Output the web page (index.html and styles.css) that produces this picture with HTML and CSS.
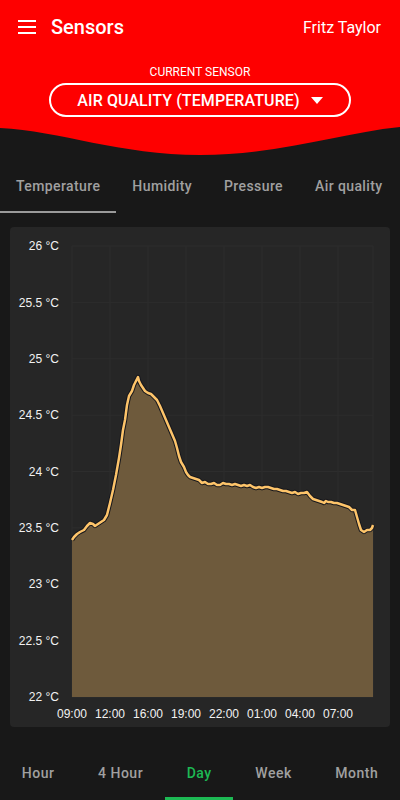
FILE: index.html
```html
<!DOCTYPE html>
<html lang="en">
<head>
  <meta charset="UTF-8" />
  <title>Sensors</title>
  <link rel="stylesheet" href="styles.css">
</head>
<body>
  <header class="header">
    <div class="topbar">
      <svg class="menu-icon" width="18" height="14" viewBox="0 0 18 14">
        <rect x="0" y="0" width="18" height="2" fill="#fff"/>
        <rect x="0" y="6" width="18" height="2" fill="#fff"/>
        <rect x="0" y="12" width="18" height="2" fill="#fff"/>
      </svg>
      <span class="title">Sensors</span>
      <span class="user">Fritz Taylor</span>
    </div>
    <div class="sensor-label">CURRENT SENSOR</div>
    <button class="sensor-select">
      <span>AIR QUALITY (TEMPERATURE)</span>
      <svg width="12" height="7" viewBox="0 0 12 7"><path d="M0 0 H12 L6 7 Z" fill="#fff"/></svg>
    </button>
  </header>
  <svg class="wave" width="400" height="30" viewBox="0 0 400 30" preserveAspectRatio="none">
    <path d="M0 0 H400 V0 C340 6 280 28 200 28 C120 28 60 4 0 1 Z" fill="#fe0000"/>
  </svg>

  <nav class="tabs">
    <div class="tab active">Temperature</div>
    <div class="tab">Humidity</div>
    <div class="tab">Pressure</div>
    <div class="tab">Air quality</div>
  </nav>

  <section class="card">
    <svg id="chart" width="380" height="500" viewBox="10 227 380 500"></svg>
  </section>

  <nav class="ranges">
    <div class="range">Hour</div>
    <div class="range">4 Hour</div>
    <div class="range active">Day</div>
    <div class="range">Week</div>
    <div class="range">Month</div>
  </nav>

  <script>
    // pontos da curva de temperatura (coordenadas da tela)
    const pts = [
      [72,540],[74,537],[77,534],[80,532],[84,530],[87,526],[90,523],[93,524],[95,526],[98,524],
      [101,522],[104,520],[107,515],[110,503],[113,490],[116,475],[119,458],[121,445],[123,430],[125,420],
      [127,405],[129,396],[132,391],[134,385],[136,381],[138,377],[139,381],[141,385],[143,388],[145,391],
      [148,393],[151,394],[154,397],[157,400],[160,406],[163,413],[166,420],[169,427],[172,434],[175,441],
      [177,448],[179,456],[181,462],[184,467],[186,472],[188,475],[190,477],[193,478],[196,479],[199,480],
      [202,483],[205,482],[208,484],[211,484],[214,483],[217,485],[220,485],[223,483],[226,484],[229,484],
      [232,485],[235,484],[238,485],[241,486],[244,485],[247,486],[250,485],[253,487],[256,488],[259,487],
      [262,488],[265,487],[268,487],[271,488],[274,489],[277,489],[280,490],[283,491],[286,491],[289,492],
      [292,493],[295,492],[298,494],[301,493],[304,493],[307,492],[310,496],[313,499],[316,500],[319,501],
      [322,502],[324,503],[326,501],[328,502],[331,502],[334,503],[337,503],[340,504],[343,505],[346,506],
      [349,507],[352,510],[355,510],[357,517],[359,524],[361,530],[364,532],[367,530],[370,530],[372,528],[373,525]
    ];

    const yTop = 246, yBottom = 697, xLeft = 72, xRight = 373;
    const step = (yBottom - yTop) / 8;
    let svg = '';

    // grade
    for (let i = 0; i <= 8; i++) {
      const y = yTop + step * i;
      svg += `<line x1="${xLeft}" y1="${y}" x2="${xRight}" y2="${y}" class="grid"/>`;
      const val = 26 - i * 0.5;
      svg += `<text x="59" y="${y + 1}" class="ylabel">${val} °C</text>`;
    }
    const horas = ['09:00','12:00','16:00','19:00','22:00','01:00','04:00','07:00'];
    horas.forEach((h, i) => {
      const x = xLeft + 38 * i;
      svg += `<line x1="${x}" y1="${yTop}" x2="${x}" y2="${yBottom}" class="grid"/>`;
      svg += `<text x="${x}" y="715" class="xlabel">${h}</text>`;
    });
    svg += `<line x1="${xRight}" y1="${yTop}" x2="${xRight}" y2="${yBottom}" class="grid"/>`;

    const linha = pts.map(p => p.join(',')).join(' ');
    svg += `<polygon points="${linha} ${xRight},${yBottom} ${xLeft},${yBottom}" class="area"/>`;
    svg += `<polyline points="${linha}" class="line-shadow"/>`;
    svg += `<polyline points="${linha}" class="line"/>`;

    document.getElementById('chart').innerHTML = svg;
  </script>
</body>
</html>
```

FILE: styles.css
```css
body {
  margin: 0;
  background: #181818;
  font-family: Roboto, "Noto Sans", sans-serif;
  width: 400px;
  height: 800px;
  overflow: hidden;
}

.header {
  background: #fe0000;
  color: #fff;
  padding-bottom: 10px;
  display: flex;
  flex-direction: column;
  align-items: center;
}
.topbar {
  width: 100%;
  box-sizing: border-box;
  height: 54px;
  display: flex;
  align-items: center;
  padding: 0 19px 0 18px;
}
.menu-icon { margin-right: 15px; }
.title { font-size: 20px; font-weight: 500; }
.user { margin-left: auto; font-size: 16px; }

.sensor-label {
  margin-top: 10px;
  font-size: 12px;
  line-height: 16px;
}
.sensor-select {
  margin-top: 3px;
  width: 302px;
  height: 34px;
  border: 2px solid #fff;
  border-radius: 17px;
  background: transparent;
  color: #fff;
  font-family: Roboto, sans-serif;
  font-size: 16px;
  font-weight: 500;
  letter-spacing: 0.1px;
  display: flex;
  align-items: center;
  justify-content: center;
  gap: 11px;
  padding: 0;
}

.wave { display: block; }

.tabs {
  display: flex;
  height: 56px;
}
.tab {
  padding: 0 16px;
  display: flex;
  align-items: center;
  color: #a0a0a0;
  font-size: 14px;
  font-weight: 500;
  letter-spacing: 0.4px;
  border-bottom: 2px solid transparent;
  padding-top: 3px;
}
.tab.active { border-bottom-color: #9a9a9a; }

.card {
  margin: 14px 10px 0;
  height: 500px;
  background: #262626;
  border-radius: 4px;
}
#chart { display: block; }
.grid { stroke: #2d2d2d; stroke-width: 1; }
.ylabel, .xlabel {
  font-family: "Liberation Sans", Arial, sans-serif;
  font-size: 12px;
  fill: #f2f2f2;
  dominant-baseline: middle;
}
.ylabel { text-anchor: end; }
.xlabel { text-anchor: middle; }
.area { fill: #6e5a3c; }
.line-shadow { fill: none; stroke: #15161c; stroke-width: 4.5; stroke-linejoin: round; }
.line { fill: none; stroke: #fdc46a; stroke-width: 2.5; stroke-linejoin: round; }

.ranges {
  margin-top: 18px;
  display: flex;
  height: 55px;
}
.range {
  flex: 1 1 auto;
  display: flex;
  align-items: center;
  justify-content: center;
  color: #a0a0a0;
  font-size: 14px;
  font-weight: 500;
  letter-spacing: 0.5px;
  border-bottom: 3px solid transparent;
  padding-top: 3px;
}
.range.active { color: #1db954; border-bottom-color: #1db954; }
```
